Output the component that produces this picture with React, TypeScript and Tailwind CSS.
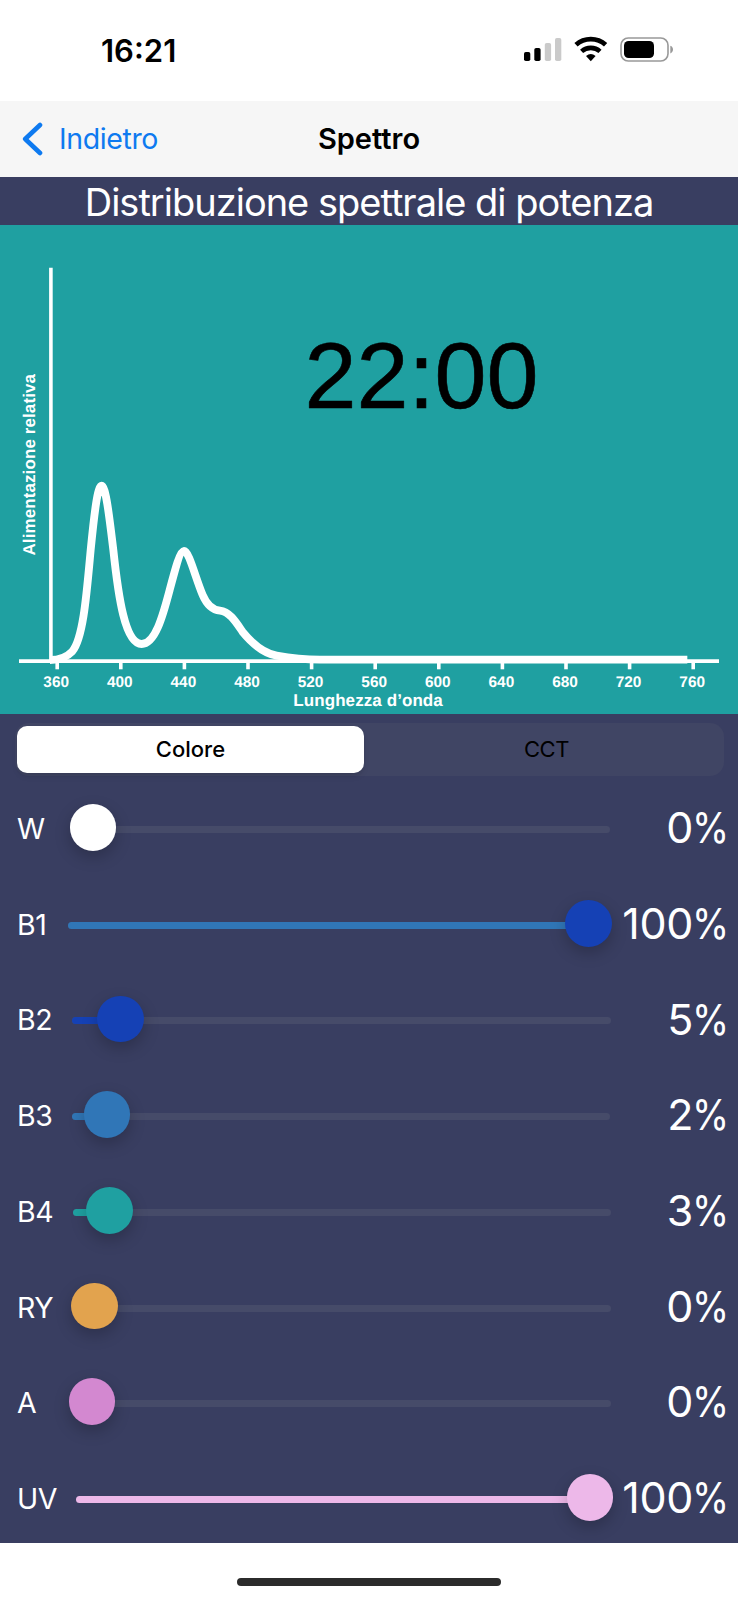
type Channel = {
    label: string;
    value: number;
    left: number;
    right: number;
    thumb: number;
    thumbColor: string;
    fillColor: string;
};

// left / right / thumb are measured from the left edge of the screen
const channels: Channel[] = [
    { label: "W", value: 0, left: 74, right: 609.5, thumb: 93, thumbColor: "bg-white", fillColor: "bg-white" },
    { label: "B1", value: 100, left: 67.5, right: 609.5, thumb: 588.3, thumbColor: "bg-[#1541b5]", fillColor: "bg-[#3076b7]" },
    { label: "B2", value: 5, left: 71.5, right: 611, thumb: 120.3, thumbColor: "bg-[#1541b5]", fillColor: "bg-[#1541b5]" },
    { label: "B3", value: 2, left: 72, right: 609.5, thumb: 107.2, thumbColor: "bg-[#3076b7]", fillColor: "bg-[#3076b7]" },
    { label: "B4", value: 3, left: 72.7, right: 611, thumb: 109.6, thumbColor: "bg-[#1fa0a1]", fillColor: "bg-[#1fa0a1]" },
    { label: "RY", value: 0, left: 75, right: 611, thumb: 94.3, thumbColor: "bg-[#e2a34e]", fillColor: "bg-[#e2a34e]" },
    { label: "A", value: 0, left: 73, right: 611, thumb: 92, thumbColor: "bg-[#d388d0]", fillColor: "bg-[#d388d0]" },
    { label: "UV", value: 100, left: 76, right: 611, thumb: 590.2, thumbColor: "bg-[#edb8e9]", fillColor: "bg-[#edb8e9]" },
];

const ticks = [360, 400, 440, 480, 520, 560, 600, 640, 680, 720, 760];

function StatusBar() {
    return (
        <div className="flex h-[101px] items-center justify-between bg-white pr-[62px] pl-[101px]">
            <span className="-mt-[1px] text-[31px] leading-none font-semibold text-black">16:21</span>

            <svg className="-mt-[2px]" width="152" height="28" viewBox="0 0 152 28" fill="none">
                <rect x="0" y="16" width="6.3" height="9" rx="1.8" fill="#000" />
                <rect x="10.3" y="12" width="6.3" height="13" rx="1.8" fill="#000" />
                <rect x="20.8" y="7" width="6.3" height="18" rx="1.8" fill="#cacaca" />
                <rect x="31" y="2" width="6.3" height="23" rx="1.8" fill="#cacaca" />

                <path d="M52 8.8a22 22 0 0 1 29.6 0" stroke="#000" strokeWidth="4.8" />
                <path d="M57.6 15.4a13.8 13.8 0 0 1 18.4 0" stroke="#000" strokeWidth="4.6" />
                <path d="M62 20q4.8-4 9.6 0L66.8 25.2z" fill="#000" />

                <rect x="97" y="2" width="47" height="23" rx="7.2" stroke="#999" strokeWidth="1.6" />
                <rect x="100" y="5" width="30" height="17" rx="4.6" fill="#000" />
                <path d="M146.3 9.8c3.6 1 3.6 6.4 0 7.6z" fill="#999" />
            </svg>
        </div>
    );
}

function NavBar() {
    return (
        <header className="grid h-[76px] grid-cols-3 items-center bg-[#f6f6f6]">
            <button className="flex items-center gap-[16px] pl-[22px] text-[#0e7af0]">
                <svg width="21" height="34" viewBox="0 0 21 34" fill="none">
                    <path d="M18 3 3.2 17 18 31" stroke="currentColor" strokeWidth="4.6" strokeLinecap="round" strokeLinejoin="round" />
                </svg>
                <span className="text-[28.5px] leading-none tracking-[-0.4px]">Indietro</span>
            </button>
            <h1 className="-mt-px text-center text-[29px] leading-none font-semibold text-black">Spettro</h1>
        </header>
    );
}

function SpectrumChart() {
    return (
        <svg
            className="block bg-[#1fa0a1]"
            width="738"
            height="489"
            viewBox="0 225 738 489"
            fontFamily="'Liberation Sans', Arial, sans-serif"
            textRendering="geometricPrecision"
        >
            <text x="304.6" y="408" fontSize="93.5" fill="#000" stroke="#000" strokeWidth="0.6">
                22:00
            </text>

            <g stroke="#fff" strokeWidth="3.6">
                <path d="M50.9 267.7V661" />
                <path d="M19 661.1H719" />
                {ticks.map((tick, i) => (
                    <path key={tick} d={`M${57.2 + i * 63.6} 661v8.3`} />
                ))}
            </g>

            <path
                transform="translate(0 460) scale(.33333)"
                d="M150 600C180 600 201 591 217 574C250 535 260 400 272 270C284 150 293 77 305 77C317 77 328 170 340 270C355 410 375 552 425 552C465 552 488 470 509 390C526 326 540 273 552 273C567 273 585 350 608 405C622 438 640 450 660 452C690 455 710 490 728 516C760 555 790 580 830 587C880 596 920 599 960 599L2062 599"
                stroke="#fff"
                strokeWidth="23.5"
                fill="none"
                strokeLinejoin="round"
            />

            <g fill="#fff" fontWeight="bold">
                {ticks.map((tick, i) => (
                    <text key={tick} x={56.2 + i * 63.6} y="687" fontSize="15.4" textAnchor="middle">
                        {tick}
                    </text>
                ))}
                <text x="293.3" y="705.5" fontSize="17" textLength="149.5">
                    Lunghezza d’onda
                </text>
                <text transform="translate(35.4 555.5) rotate(-90)" fontSize="17" textLength="181.5">
                    Alimentazione relativa
                </text>
            </g>
        </svg>
    );
}

function ModeSwitch() {
    return (
        <div className="mr-[14px] ml-[15px] flex h-[53px] rounded-[14px] bg-[#404564] p-[3px] text-[22px] text-black">
            <button className="-ml-px h-[47px] w-[347px] rounded-[10px] bg-white pb-px font-medium shadow-md">Colore</button>
            <button className="flex-1 pb-px pl-[8px] tracking-[-0.4px]">CCT</button>
        </div>
    );
}

function ChannelRow({ label, value, left, right, thumb, thumbColor, fillColor }: Channel) {
    return (
        <div className="relative flex h-[95.7px] items-center justify-between pr-[9px] pl-[17px] text-white">
            <span className="pt-[2px] text-[28.5px] leading-none tracking-[-0.4px]">{label}</span>

            <div
                className="absolute top-[45.6px] h-[7px] rounded-full bg-[#464b69]"
                style={{ left, width: right - left }}
            >
                <div className={`h-full rounded-full ${fillColor}`} style={{ width: thumb - left }} />
            </div>
            <div
                className={`absolute top-[23.8px] h-[46.6px] w-[46.6px] rounded-full shadow-[0_6px_16px_rgba(0,0,0,0.22)] ${thumbColor}`}
                style={{ left: thumb - 23.3 }}
            />

            <span className="-mt-px flex text-[43px] leading-none tracking-[-0.3px]">
                {value}
                <span className="-ml-[6px] origin-right scale-x-[0.88]">%</span>
            </span>
        </div>
    );
}

export default function App() {
    return (
        <main className="flex h-[1600px] w-[738px] flex-col overflow-hidden bg-white font-[Inter,sans-serif]">
            <StatusBar />
            <NavBar />

            <h2 className="h-[48px] bg-[#393e61] text-center text-[38px] leading-[50px] tracking-[-1px] whitespace-nowrap text-white">
                Distribuzione spettrale di potenza
            </h2>
            <SpectrumChart />

            <section className="h-[829px] overflow-hidden bg-[#393e61] pt-[9px]">
                <ModeSwitch />
                <div className="pt-[4.5px]">
                    {channels.map((channel) => (
                        <ChannelRow key={channel.label} {...channel} />
                    ))}
                </div>
            </section>

            <div className="flex flex-1 justify-center pt-[35px]">
                <div className="h-[8px] w-[264px] rounded-full bg-[#2b2b2b]" />
            </div>
        </main>
    );
}
